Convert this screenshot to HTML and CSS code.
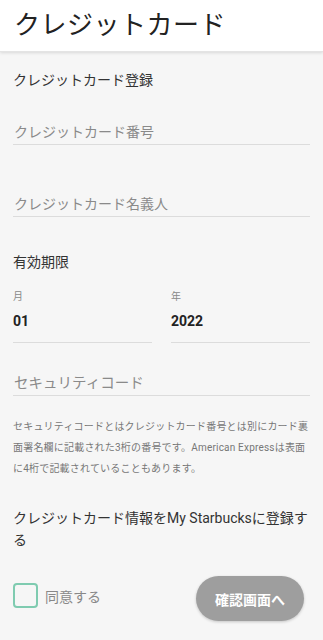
FILE: index.html
```html
<!DOCTYPE html>
<html lang="ja">
<head>
<meta charset="utf-8">
<link rel="stylesheet" href="styles.css">
</head>
<body>
<header class="appbar"><h1 class="title">クレジットカード</h1></header>
<main class="content">
  <div class="section-title">クレジットカード登録</div>
  <div class="field field-card"><span class="placeholder">クレジットカード番号</span></div>
  <div class="field field-name"><span class="placeholder">クレジットカード名義人</span></div>
  <div class="label-expiry">有効期限</div>
  <div class="expiry">
    <div class="select">
      <div class="select-label">月</div>
      <div class="select-value">01</div>
    </div>
    <div class="select">
      <div class="select-label">年</div>
      <div class="select-value">2022</div>
    </div>
  </div>
  <div class="field field-cvv"><span class="placeholder">セキュリティコード</span></div>
  <p class="note">セキュリティコードとはクレジットカード番号とは別にカード裏面署名欄に記載された3桁の番号です。American Expressは表面に4桁で記載されていることもあります。</p>
  <p class="register">クレジットカード情報をMy Starbucksに登録する</p>
  <div class="actions">
    <label class="agree"><span class="checkbox"></span><span class="agree-text">同意する</span></label>
    <button class="confirm">確認画面へ</button>
  </div>
</main>
</body>
</html>
```
FILE: styles.css
```css
html, body {
  margin: 0;
  padding: 0;
}
body {
  background: #f6f6f6;
  font-family: Roboto, "Noto Sans CJK JP", sans-serif;
  color: #333;
  width: 323px;
  height: 640px;
  overflow: hidden;
}
.appbar {
  background: #fff;
  height: 52px;
  box-shadow: 0 1px 3px rgba(0,0,0,0.12);
  border-bottom: 1px solid #e4e4e4;
  box-sizing: border-box;
}
.title {
  margin: 0;
  padding: 7px 0 0 14px;
  font-size: 26px;
  font-weight: 400;
  line-height: 36px;
  color: #222;
  letter-spacing: 0.5px;
}
.content {
  padding: 0 13px;
}
.section-title {
  font-size: 14px;
  line-height: 20px;
  padding-top: 18px;
  color: #333;
}
.field {
  border-bottom: 1px solid #dcdcdc;
  height: 23px;
  box-sizing: border-box;
}
.field-card { margin-top: 32px; }
.field-name { margin-top: 49px; }
.placeholder {
  display: block;
  font-size: 14px;
  line-height: 20px;
  color: #8a8a8a;
  padding-left: 1px;
}
.label-expiry {
  margin-top: 35px;
  font-size: 14px;
  line-height: 20px;
  color: #333;
}
.expiry {
  display: grid;
  grid-template-columns: 1fr 1fr;
  column-gap: 19px;
  margin-top: 18px;
}
.select {
  border-bottom: 1px solid #dcdcdc;
  height: 53px;
  box-sizing: border-box;
}
.select-label {
  font-size: 10px;
  line-height: 14px;
  color: #888;
}
.select-value {
  margin-top: 7px;
  font-size: 14px;
  font-weight: 700;
  line-height: 20px;
  color: #222;
}
.field-cvv { margin-top: 33px; height: 20px; }
.field-cvv .placeholder { font-size: 14.5px; line-height: 16px; }
.note {
  margin: 20px 0 0;
  font-size: 10px;
  line-height: 21px;
  color: #777;
  letter-spacing: 0.2px;
}
.register {
  margin: 28px 0 0;
  font-size: 14px;
  line-height: 22px;
  color: #333;
}
.actions {
  display: flex;
  align-items: center;
  justify-content: space-between;
  margin-top: 25px;
  padding-right: 6px;
}
.agree {
  display: flex;
  align-items: center;
  gap: 7px;
  margin-bottom: 6px;
}
.checkbox {
  width: 21px;
  height: 21px;
  border: 2px solid #7fcbb0;
  border-radius: 4px;
  display: block;
}
.agree-text {
  font-size: 14px;
  color: #888;
}
.confirm {
  width: 108px;
  height: 45px;
  border: none;
  border-radius: 23px;
  background: #9e9e9e;
  color: #fff;
  font-family: Roboto, "Noto Sans CJK JP", sans-serif;
  font-size: 14px;
  font-weight: 700;
  box-shadow: 0 1px 3px rgba(0,0,0,0.2);
  padding: 0;
}
```
